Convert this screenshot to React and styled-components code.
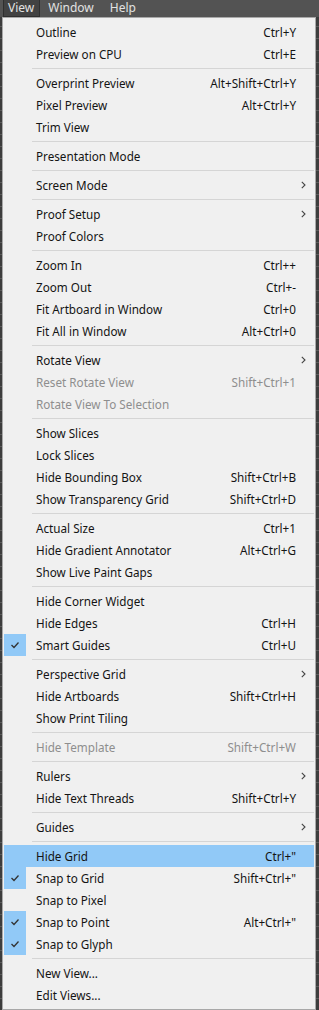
import React from "react";
import styled, { createGlobalStyle } from "styled-components";

const Global = createGlobalStyle`
  html, body { margin: 0; padding: 0; }
  body {
    width: 319px;
    height: 1010px;
    overflow: hidden;
    background: #3d3d3d;
    font-family: "Noto Sans", "Open Sans", sans-serif;
  }
`;

const Page = styled.div`
  width: 319px;
  height: 1010px;
  background-color: #3d3d3d;
  background-image:
    repeating-linear-gradient(0deg, transparent 0 11px, #5a5a5a 11px 12px),
    repeating-linear-gradient(90deg, transparent 0 11px, #5a5a5a 11px 12px);
  display: flex;
  flex-direction: column;
`;

const MenuBar = styled.div`
  height: 17px;
  background: #535353;
  display: flex;
  align-items: stretch;
  padding-left: 3px;
  font-size: 12px;
  color: #e2e2e2;
`;

const BarItem = styled.div`
  display: flex;
  align-items: center;
  padding: 0 ${(p) => (p.$active ? "5px" : "7px")} 1px ${(p) => (p.$active ? "4px" : "7px")};
  background: ${(p) => (p.$active ? "#424242" : "transparent")};
  border: 1px solid ${(p) => (p.$active ? "#2f2f2f" : "transparent")};
  border-top: none;
  box-sizing: border-box;
  line-height: 1;
`;

const Panel = styled.div`
  margin-left: 2px;
  width: 314px;
  box-sizing: border-box;
  background: #f0f0f0;
  border: 1px solid #a8a8a8;
  padding: 3px 1px 3px 1px;
  display: flex;
  flex-direction: column;
`;

const Row = styled.div`
  position: relative;
  height: 22px;
  box-sizing: border-box;
  display: flex;
  align-items: center;
  padding: 0 18px 1px 32px;
  background: ${(p) => (p.$hover ? "#91c9f7" : "transparent")};
  color: ${(p) => (p.$disabled ? "#8e8e8e" : "#141414")};
  font-size: 11.7px;
  white-space: nowrap;
`;

const CheckBox = styled.div`
  position: absolute;
  left: 0;
  top: 0;
  width: 22px;
  height: 22px;
  background: #91c9f7;
  display: flex;
  align-items: center;
  justify-content: center;
`;

const Label = styled.span`
  flex: 1;
`;

const Shortcut = styled.span`
  text-align: right;
`;

const Arrow = styled.span`
  position: absolute;
  right: 8px;
  top: 0;
  height: 22px;
  display: flex;
  align-items: center;
`;

const Separator = styled.div`
  height: 7px;
  display: flex;
  align-items: center;
  padding-left: 28px;
  &::after {
    content: "";
    flex: 1;
    height: 1px;
    background: #d5d5d5;
  }
`;

const Check = () => (
  <svg width="10" height="8" viewBox="0 0 10 8">
    <path d="M1.5 4 L4 6.5 L8.5 1.5" fill="none" stroke="#333" strokeWidth="1.3" />
  </svg>
);

const Chevron = () => (
  <svg width="5" height="8" viewBox="0 0 5 8">
    <path d="M0.8 0.8 L4 4 L0.8 7.2" fill="none" stroke="#444" strokeWidth="1.1" />
  </svg>
);

const groups = [
  [
    { l: "Outline", s: "Ctrl+Y" },
    { l: "Preview on CPU", s: "Ctrl+E" },
  ],
  [
    { l: "Overprint Preview", s: "Alt+Shift+Ctrl+Y" },
    { l: "Pixel Preview", s: "Alt+Ctrl+Y" },
    { l: "Trim View" },
  ],
  [{ l: "Presentation Mode" }],
  [{ l: "Screen Mode", sub: true }],
  [{ l: "Proof Setup", sub: true }, { l: "Proof Colors" }],
  [
    { l: "Zoom In", s: "Ctrl++" },
    { l: "Zoom Out", s: "Ctrl+-" },
    { l: "Fit Artboard in Window", s: "Ctrl+0" },
    { l: "Fit All in Window", s: "Alt+Ctrl+0" },
  ],
  [
    { l: "Rotate View", sub: true },
    { l: "Reset Rotate View", s: "Shift+Ctrl+1", d: true },
    { l: "Rotate View To Selection", d: true },
  ],
  [
    { l: "Show Slices" },
    { l: "Lock Slices" },
    { l: "Hide Bounding Box", s: "Shift+Ctrl+B" },
    { l: "Show Transparency Grid", s: "Shift+Ctrl+D" },
  ],
  [
    { l: "Actual Size", s: "Ctrl+1" },
    { l: "Hide Gradient Annotator", s: "Alt+Ctrl+G" },
    { l: "Show Live Paint Gaps" },
  ],
  [
    { l: "Hide Corner Widget" },
    { l: "Hide Edges", s: "Ctrl+H" },
    { l: "Smart Guides", s: "Ctrl+U", c: true },
  ],
  [
    { l: "Perspective Grid", sub: true },
    { l: "Hide Artboards", s: "Shift+Ctrl+H" },
    { l: "Show Print Tiling" },
  ],
  [{ l: "Hide Template", s: "Shift+Ctrl+W", d: true }],
  [
    { l: "Rulers", sub: true },
    { l: "Hide Text Threads", s: "Shift+Ctrl+Y" },
  ],
  [{ l: "Guides", sub: true }],
  [
    { l: "Hide Grid", s: 'Ctrl+"', h: true },
    { l: "Snap to Grid", s: 'Shift+Ctrl+"', c: true },
    { l: "Snap to Pixel" },
    { l: "Snap to Point", s: 'Alt+Ctrl+"', c: true },
    { l: "Snap to Glyph", c: true },
  ],
  [{ l: "New View..." }, { l: "Edit Views..." }],
];

export default function App() {
  return (
    <>
      <Global />
      <Page>
        <MenuBar>
          <BarItem $active>View</BarItem>
          <BarItem>Window</BarItem>
          <BarItem>Help</BarItem>
        </MenuBar>
        <Panel>
          {groups.map((g, gi) => (
            <React.Fragment key={gi}>
              {gi > 0 && <Separator />}
              {g.map((it) => (
                <Row key={it.l} $hover={it.h} $disabled={it.d}>
                  {it.c && (
                    <CheckBox>
                      <Check />
                    </CheckBox>
                  )}
                  <Label>{it.l}</Label>
                  {it.s && <Shortcut>{it.s}</Shortcut>}
                  {it.sub && (
                    <Arrow>
                      <Chevron />
                    </Arrow>
                  )}
                </Row>
              ))}
            </React.Fragment>
          ))}
        </Panel>
      </Page>
    </>
  );
}
